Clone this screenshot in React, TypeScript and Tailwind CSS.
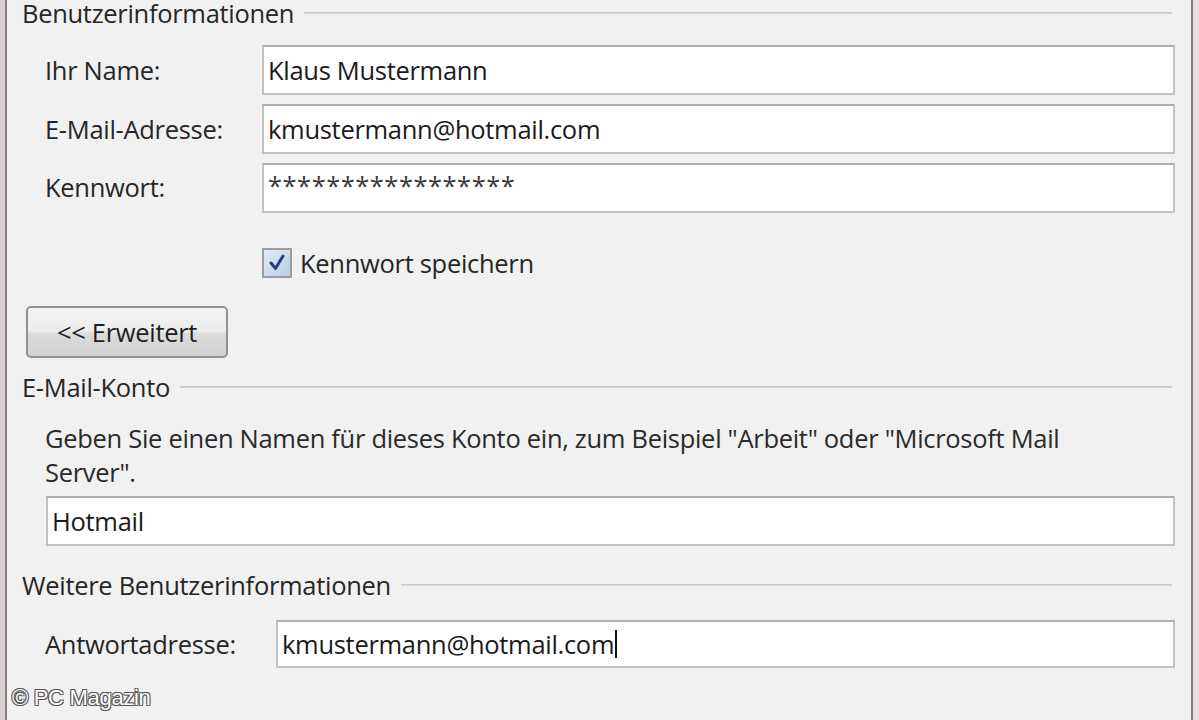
import React from 'react';

const font = { fontFamily: '"Open Sans", "Noto Sans", sans-serif' };

function GroupHeader({ title, className = '' }: { title: string; className?: string }) {
  return (
    <div className={`flex h-[32px] items-center pl-[15px] pr-[19px] ${className}`}>
      <span className="whitespace-nowrap">{title}</span>
      <div className="ml-[10px] h-[2px] flex-1 border-t border-[#c9c9c9] border-b-white bg-[#d5d5d5]" />
    </div>
  );
}

function Field({ value, className = '' }: { value: string; className?: string }) {
  return (
    <div
      className={`flex h-[50px] items-center border-2 border-[#c2c2c2] border-t-[#aeaeae] bg-white pl-[4px] text-[#1b1b1b] ${className}`}
    >
      {value}
    </div>
  );
}

function Row({ label, value }: { label: string; value: string }) {
  return (
    <div className="flex items-center">
      <span className="w-[255px] shrink-0 pl-[38px]">{label}</span>
      <Field value={value} className="flex-1" />
    </div>
  );
}

export default function App() {
  return (
    <div
      className="flex h-[720px] w-[1199px] overflow-hidden bg-[#f1f1f1] text-[25.5px] leading-[32px] tracking-[-0.3px] text-[#262626]"
      style={font}
    >
      <div className="w-[5px] shrink-0 bg-[#d8d0d2]" />
      <div className="w-[2px] shrink-0 bg-[#857b7d]" />

      <div className="relative flex flex-1 flex-col">
        <GroupHeader title="Benutzerinformationen" className="mt-[-3px]" />

        <div className="mt-[16px] flex flex-col gap-[9px] pr-[16px]">
          <Row label="Ihr Name:" value="Klaus Mustermann" />
          <Row label="E-Mail-Adresse:" value="kmustermann@hotmail.com" />
          <div className="flex">
            <span className="w-[255px] shrink-0 pl-[38px] pt-[8px]">Kennwort:</span>
            <div className="flex h-[50px] flex-1 items-start border-2 border-[#c2c2c2] border-t-[#aeaeae] bg-white pl-[4px] pt-[4px] tracking-[0.5px] text-[#3a3a3a]">
              *****************
            </div>
          </div>
        </div>

        <div className="mt-[35px] flex h-[30px] items-center pl-[255px]">
          <div className="flex h-[30px] w-[30px] items-center justify-center border-2 border-[#9c9c9c] bg-gradient-to-br from-[#e3ecf7] to-[#b9cde4]">
            <svg width="20" height="20" viewBox="0 0 20 20">
              <path d="M4 10 L8.5 15.5 L16 3" fill="none" stroke="#22407a" strokeWidth="3" strokeLinecap="round" strokeLinejoin="round" />
            </svg>
          </div>
          <span className="ml-[8px]">Kennwort speichern</span>
        </div>

        <div className="mt-[28px] pl-[19px]">
          <button className="flex h-[52px] w-[202px] items-center justify-center rounded-[5px] border-2 border-[#8f9191] bg-[linear-gradient(#f4f4f4_0%,#ececec_50%,#dcdcdc_52%,#d2d2d2_100%)] text-[#1e1e1e]">
            &lt;&lt; Erweitert
          </button>
        </div>

        <GroupHeader title="E-Mail-Konto" className="mt-[13px]" />

        <p className="mt-[18px] pl-[38px] pr-[20px] leading-[34px] text-[#2a2a2a]">
          Geben Sie einen Namen für dieses Konto ein, zum Beispiel "Arbeit" oder "Microsoft Mail
          <br />
          Server".
        </p>

        <div className="mt-[7px] pl-[39px] pr-[16px]">
          <Field value="Hotmail" />
        </div>

        <GroupHeader title="Weitere Benutzerinformationen" className="mt-[23px]" />

        <div className="mt-[19px] flex items-center pr-[16px]">
          <span className="w-[269px] shrink-0 pl-[38px]">Antwortadresse:</span>
          <div className="flex h-[48px] flex-1 items-center border-2 border-[#c2c2c2] border-t-[#aeaeae] bg-white pl-[4px] text-[#1b1b1b]">
            kmustermann@hotmail.com
            <span className="ml-[1px] h-[28px] w-[2px] bg-[#111]" />
          </div>
        </div>

        <div
          className="absolute bottom-[10px] left-[5px] text-[22px] leading-[24px] text-white [text-shadow:-1px_-1px_0_#555,1px_-1px_0_#555,-1px_1px_0_#555,1px_1px_0_#555]"
          style={{ fontFamily: '"Liberation Sans", Arial, sans-serif' }}
        >
          © PC Magazin
        </div>
      </div>

      <div className="w-[2px] shrink-0 bg-[#857b7d]" />
      <div className="w-[6px] shrink-0 bg-[#e6dfe0]" />
    </div>
  );
}
